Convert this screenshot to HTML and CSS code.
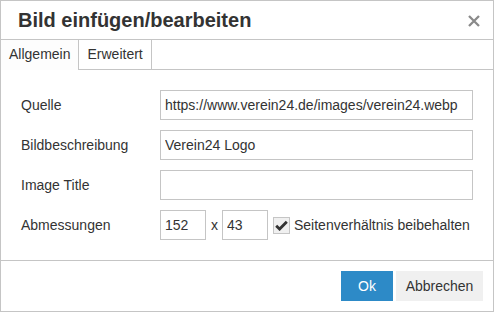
FILE: index.html
```html
<!DOCTYPE html>
<html lang="de">
<head>
<meta charset="utf-8">
<title>Bild einfügen/bearbeiten</title>
<link rel="stylesheet" href="styles.css">
</head>
<body>
<div class="dialog">
  <div class="head">
    <span class="title">Bild einfügen/bearbeiten</span>
    <button class="close" aria-label="Schließen">
      <svg width="12" height="12" viewBox="0 0 12 12"><path d="M1 1L11 11M11 1L1 11" stroke="#8a8a8a" stroke-width="2.3" stroke-linecap="butt"/></svg>
    </button>
  </div>
  <div class="tabs">
    <div class="tab active">Allgemein</div>
    <div class="tab">Erweitert</div>
  </div>
  <div class="panel">
    <div class="row">
      <label class="lbl">Quelle</label>
      <input class="field" type="text" value="https://www.verein24.de/images/verein24.webp">
    </div>
    <div class="row">
      <label class="lbl">Bildbeschreibung</label>
      <input class="field" type="text" value="Verein24 Logo">
    </div>
    <div class="row">
      <label class="lbl">Image Title</label>
      <input class="field" type="text" value="">
    </div>
    <div class="row">
      <label class="lbl">Abmessungen</label>
      <div class="dims">
        <input class="field small" type="text" value="152">
        <span class="times">x</span>
        <input class="field small" type="text" value="43">
        <span class="check">
          <svg width="13" height="11" viewBox="0 0 13 11"><path d="M1.2 5.8L4.6 9.1L11.8 1.8" fill="none" stroke="#333" stroke-width="2.8"/></svg>
        </span>
        <span class="checklbl">Seitenverhältnis beibehalten</span>
      </div>
    </div>
  </div>
  <div class="foot">
    <button class="btn primary">Ok</button>
    <button class="btn">Abbrechen</button>
  </div>
</div>
</body>
</html>
```
FILE: styles.css
```css
* { box-sizing: border-box; }
html, body { margin: 0; padding: 0; background: #fff; }
body {
  font-family: "Liberation Sans", Arial, sans-serif;
  font-size: 14px;
  color: #333;
}
.dialog {
  width: 494px;
  height: 312px;
  border: 1px solid #c5c5c5;
  display: flex;
  flex-direction: column;
  background: #fff;
}
.head {
  height: 39px;
  border-bottom: 1px solid #c5c5c5;
  display: flex;
  align-items: center;
  justify-content: space-between;
  padding: 0 13px 0 17px;
}
.title {
  font-size: 20px;
  font-weight: bold;
  line-height: 38px;
  color: #333;
}
.close {
  border: 0;
  background: none;
  padding: 0;
  width: 12px;
  height: 12px;
  display: flex;
  margin-top: 1px;
}
.tabs {
  height: 30px;
  border-bottom: 1px solid #c5c5c5;
  display: flex;
}
.tab {
  padding: 0 8px;
  line-height: 29px;
  border-right: 1px solid #c5c5c5;
  background: #fff;
  height: 29px;
}
.tab.active {
  background: #fdfdfd;
  height: 30px;
}
.panel {
  padding: 20px 20px 20px 20px;
  display: flex;
  flex-direction: column;
  gap: 10px;
  border-bottom: 1px solid #c5c5c5;
}
.row {
  display: flex;
  align-items: center;
  height: 30px;
}
.lbl {
  width: 139px;
  color: #333;
}
.field {
  height: 30px;
  border: 1px solid #c5c5c5;
  padding: 0 4px;
  font-family: "Liberation Sans", Arial, sans-serif;
  font-size: 14px;
  color: #333;
  background: #fff;
  width: 313px;
  border-radius: 0;
  outline: none;
}
.field.small { width: 46px; }
.dims {
  display: flex;
  align-items: center;
}
.times {
  margin: 0 4px 0 5px;
}
.check {
  width: 17px;
  height: 17px;
  border: 1px solid #c5c5c5;
  background: #f0f0f0;
  margin-left: 5px;
  display: flex;
  align-items: center;
  justify-content: center;
}
.checklbl {
  margin-left: 4px;
}
.foot {
  flex: 1;
  display: flex;
  justify-content: flex-end;
  align-items: flex-start;
  padding: 10px 10px 0 0;
  gap: 3px;
}
.btn {
  height: 30px;
  border: 0;
  border-radius: 0;
  font-family: "Liberation Sans", Arial, sans-serif;
  font-size: 14px;
  color: #333;
  background: #f0f0f0;
  padding: 0 8px;
  width: 87px;
}
.btn.primary {
  background: #2d8ac7;
  color: #fff;
  width: 52px;
}
```
